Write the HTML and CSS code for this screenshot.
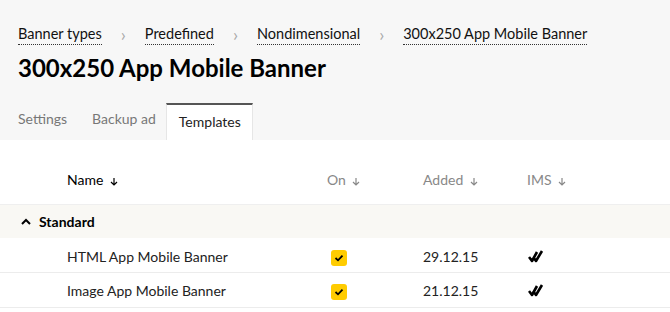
FILE: index.html
```html
<!DOCTYPE html>
<html>
<head>
<meta charset="utf-8">
<link rel="stylesheet" href="styles.css">
</head>
<body>
<div class="top">
  <nav class="crumbs">
    <a class="crumb">Banner types</a><span class="sep">›</span>
    <a class="crumb">Predefined</a><span class="sep">›</span>
    <a class="crumb">Nondimensional</a><span class="sep">›</span>
    <a class="crumb">300x250 App Mobile Banner</a>
  </nav>
  <h1 class="title">300x250 App Mobile Banner</h1>
  <div class="tabs">
    <div class="tab">Settings</div>
    <div class="tab">Backup ad</div>
    <div class="tab active">Templates</div>
  </div>
</div>
<div class="table">
  <div class="row head">
    <div class="c name strong">Name <svg class="arr" width="8" height="9" viewBox="0 0 8 9"><path d="M4 1 V8 M1 5 L4 8 L7 5" fill="none" stroke="currentColor" stroke-width="1.2"/></svg></div>
    <div class="c on">On <svg class="arr" width="8" height="9" viewBox="0 0 8 9"><path d="M4 1 V8 M1 5 L4 8 L7 5" fill="none" stroke="currentColor" stroke-width="1.2"/></svg></div>
    <div class="c added">Added <svg class="arr" width="8" height="9" viewBox="0 0 8 9"><path d="M4 1 V8 M1 5 L4 8 L7 5" fill="none" stroke="currentColor" stroke-width="1.2"/></svg></div>
    <div class="c ims">IMS <svg class="arr" width="8" height="9" viewBox="0 0 8 9"><path d="M4 1 V8 M1 5 L4 8 L7 5" fill="none" stroke="currentColor" stroke-width="1.2"/></svg></div>
  </div>
  <div class="row group">
    <svg class="caret" width="10" height="7" viewBox="0 0 10 7"><path d="M1 6 L5 2 L9 6" fill="none" stroke="#000" stroke-width="2"/></svg>
    <span>Standard</span>
  </div>
  <div class="row item">
    <div class="c name">HTML App Mobile Banner</div>
    <div class="c on"><span class="check"><svg width="10" height="8" viewBox="0 0 10 8"><path d="M1.5 4 L4 6.3 L8.5 1.7" fill="none" stroke="#000" stroke-width="1.8"/></svg></span></div>
    <div class="c added">29.12.15</div>
    <div class="c ims"><svg class="dbl" width="16" height="14" viewBox="0 0 16 14"><path d="M1 8 L4 12 L9 3 M5 8 L8 12 L14 2" fill="none" stroke="#000" stroke-width="2.6" stroke-linejoin="round"/></svg></div>
  </div>
  <div class="row item">
    <div class="c name">Image App Mobile Banner</div>
    <div class="c on"><span class="check"><svg width="10" height="8" viewBox="0 0 10 8"><path d="M1.5 4 L4 6.3 L8.5 1.7" fill="none" stroke="#000" stroke-width="1.8"/></svg></span></div>
    <div class="c added">21.12.15</div>
    <div class="c ims"><svg class="dbl" width="16" height="14" viewBox="0 0 16 14"><path d="M1 8 L4 12 L9 3 M5 8 L8 12 L14 2" fill="none" stroke="#000" stroke-width="2.6" stroke-linejoin="round"/></svg></div>
  </div>
</div>
</body>
</html>
```
FILE: styles.css
```css
* { box-sizing: border-box; }
body {
  margin: 0;
  font-family: Lato, "Open Sans", sans-serif;
  color: #000;
  background: #fff;
}
.top {
  background: #f7f7f7;
  padding: 22px 0 0 18px;
}
.crumbs {
  display: flex;
  align-items: center;
  font-size: 14.5px;
  line-height: 22px;
  height: 24px;
}
.crumb {
  color: #111;
  border-bottom: 1px dotted #333;
  line-height: 20px;
}
.sep {
  color: #aaa;
  margin: 0 19px;
  font-size: 18px;
}
.title {
  margin: 7px 0 0;
  font-size: 24px;
  font-weight: 700;
  line-height: 30px;
}
.tabs {
  display: flex;
  margin-top: 20px;
  height: 37px;
}
.tab {
  font-size: 14px;
  color: #777;
  padding: 7px 25px 0 0;
}
.tab.active {
  background: #fff;
  color: #222;
  border-top: 2px solid #555;
  border-left: 1px solid #e6e6e6;
  border-right: 1px solid #e6e6e6;
  padding: 8px 12px 0;
  width: 87px;
  margin-left: -15px;
}
.row {
  display: flex;
  align-items: center;
  font-size: 14px;
}
.head {
  height: 65px;
  border-bottom: 1px solid #efefef;
  color: #888;
  align-items: flex-start;
  padding-top: 30px;
  line-height: 20px;
}
.head .strong { color: #000; }
.arr { margin-left: 3px; vertical-align: -1px; }
.c.name { width: 327px; padding-left: 67px; }
.c.on { width: 96px; }
.c.added { width: 104px; }
.c.ims { width: 60px; }
.group {
  height: 33px;
  background: #f9f8f4;
  padding-left: 21px;
  font-weight: 700;
}
.caret { margin-right: 8px; }
.item {
  height: 35px;
  border-bottom: 1px solid #ececec;
  padding-top: 3px;
}
.item:last-child { padding-top: 1px; }
.item .c.name { color: #222; }
.item .c.added { color: #222; }
.check {
  display: inline-flex;
  align-items: center;
  justify-content: center;
  width: 16px;
  height: 16px;
  background: #ffcc00;
  border-radius: 3px;
  margin-left: 4px;
  margin-top: 2px;
}
.dbl { margin-top: 2px; margin-left: 1px; }
```
